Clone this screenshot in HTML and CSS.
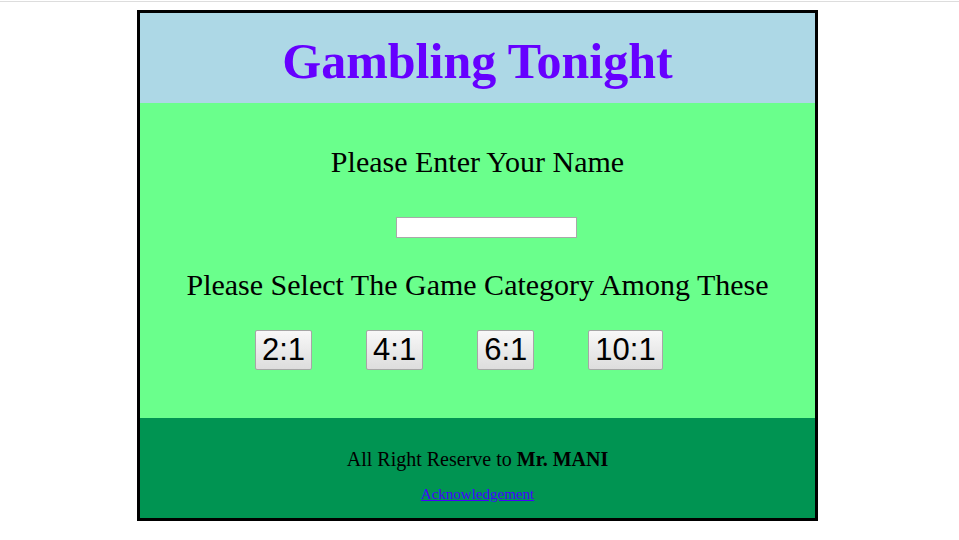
FILE: index.html
```html
<!DOCTYPE html>
<html>
<head>
<meta charset="utf-8">
<title>Gambling Tonight</title>
<link rel="stylesheet" href="styles.css">
</head>
<body>
<div class="topline"></div>
<div class="box">
  <header class="head">
    <h1 class="title">Gambling Tonight</h1>
  </header>
  <main class="main">
    <h2 class="label">Please Enter Your Name</h2>
    <input class="name" type="text">
    <h2 class="label label2">Please Select The Game Category Among These</h2>
    <div class="buttons">
      <button class="btn">2:1</button>
      <button class="btn">4:1</button>
      <button class="btn">6:1</button>
      <button class="btn">10:1</button>
    </div>
  </main>
  <footer class="foot">
    <p class="rights">All Right Reserve to <b>Mr. MANI</b></p>
    <a class="ack" href="#">Acknowledgement</a>
  </footer>
</div>
</body>
</html>
```
FILE: styles.css
```css
html, body {
  margin: 0;
  padding: 0;
  background: #ffffff;
  font-family: "Liberation Serif", "Times New Roman", serif;
}
.topline {
  margin-top: 1px;
  height: 1px;
  background: #dddddd;
}
.box {
  margin: 8px 0 0 137px;
  width: 675px;
  border: 3px solid #000000;
  display: flex;
  flex-direction: column;
}
.head {
  height: 90px;
  background: #add8e6;
  display: flex;
  justify-content: center;
  padding-top: 20px;
  box-sizing: border-box;
}
.title {
  margin: 0;
  font-size: 50px;
  line-height: 56px;
  font-weight: bold;
  color: #6600ff;
}
.main {
  height: 315px;
  background: #6aff8c;
  display: flex;
  flex-direction: column;
  align-items: center;
  padding-top: 42px;
  box-sizing: border-box;
}
.label {
  margin: 0;
  font-size: 30px;
  line-height: 34px;
  font-weight: normal;
  color: #000000;
}
.name {
  margin-top: 38px;
  margin-left: 18px;
  width: 181px;
  height: 21px;
  box-sizing: border-box;
  border: 1px solid #a9a9a9;
  background: #ffffff;
  padding: 0;
}
.label2 {
  margin-top: 30px;
}
.buttons {
  margin-top: 28px;
  align-self: stretch;
  display: flex;
  gap: 54px;
  padding-left: 115px;
}
.btn {
  height: 40px;
  box-sizing: border-box;
  padding: 0 6px;
  font-family: "Liberation Sans", Arial, sans-serif;
  font-size: 31px;
  color: #000000;
  border: 1px solid #a6a6a6;
  border-radius: 2px;
  background: linear-gradient(#f8f8f8, #dddddd);
}
.foot {
  height: 100px;
  background: #009452;
  display: flex;
  flex-direction: column;
  align-items: center;
  padding-top: 29px;
  box-sizing: border-box;
}
.rights {
  margin: 0;
  font-size: 20px;
  line-height: 24px;
  color: #000000;
}
.ack {
  margin-top: 14px;
  font-size: 15px;
  line-height: 18px;
  color: #4400ff;
}
```
